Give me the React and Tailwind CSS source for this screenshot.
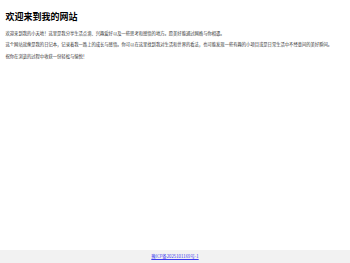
export default function App() {
  return (
    <div
      className="min-h-screen flex flex-col bg-white text-[#333]"
      style={{ fontFamily: '"Noto Sans CJK SC", "Noto Sans", sans-serif' }}
    >
      <main className="flex-1 px-[5.5px] pt-[5.5px]">
        <h1 className="text-[9px] font-bold leading-[1.25] text-black mt-[5.9px] mb-[7px]">
          欢迎来到我的网站
        </h1>
        <p className="text-[4.3px] leading-[1.6] my-[4.8px]">
          欢迎来到我的小天地！这里是我分享生活点滴、兴趣爱好以及一些思考和感悟的地方。愿美好能通过网络与你相遇。
        </p>
        <p className="text-[4.3px] leading-[1.6] my-[4.8px]">
          这个网站就像是我的日记本，记录着我一路上的成长与感悟。你可以在这里找到我对生活和世界的看法，也可能发现一些有趣的小项目或是日常生活中不经意间的美好瞬间。
        </p>
        <p className="text-[4.3px] leading-[1.6] my-[4.8px]">
          祝你在浏览的过程中收获一份轻松与愉悦！
        </p>
      </main>
      <footer className="h-[13px] bg-[#f2f2f2] flex items-center justify-center">
        <a href="#" className="text-[4.3px] text-[#3b3bf0] underline">
          豫ICP备2025101169号-1
        </a>
      </footer>
    </div>
  );
}
